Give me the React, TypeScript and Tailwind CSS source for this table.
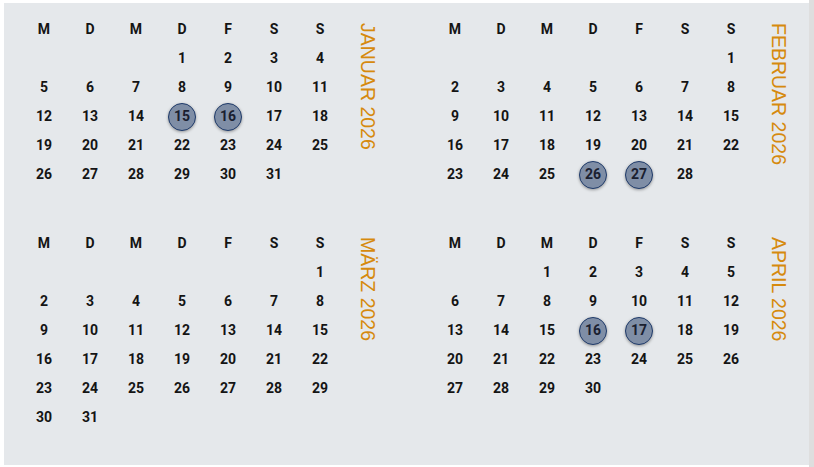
import React from "react";

interface MonthProps {
  name: string;
  offset: number; // weekday of the 1st, Monday = 0
  days: number;
  marked?: number[];
}

const weekdays = ["M", "D", "M", "D", "F", "S", "S"];

const Month = ({ name, offset, days, marked = [] }: MonthProps) => {
  const cells: (number | null)[] = [];
  for (let i = 0; i < offset; i++) cells.push(null);
  for (let d = 1; d <= days; d++) cells.push(d);
  while (cells.length % 7 !== 0) cells.push(null);

  const weeks: (number | null)[][] = [];
  for (let i = 0; i < cells.length; i += 7) weeks.push(cells.slice(i, i + 7));

  return (
    <div className="flex items-start">
      <div className="flex flex-col">
        <div className="flex">
          {weekdays.map((w, i) => (
            <div
              key={i}
              className="flex h-[29px] w-[46px] items-center justify-center text-[14px] font-bold text-[#141414]"
            >
              {w}
            </div>
          ))}
        </div>
        {weeks.map((week, wi) => (
          <div key={wi} className="flex">
            {week.map((d, di) => (
              <div
                key={di}
                className="flex h-[29px] w-[46px] items-center justify-center text-[14px] font-bold text-[#141414]"
              >
                {d !== null &&
                  (marked.includes(d) ? (
                    <span className="flex h-[28px] w-[28px] items-center justify-center rounded-full border-[1.5px] border-[#1f3b6b] bg-[#7f8ea6] text-[#1a2030] shadow-[0_1px_3px_rgba(0,0,0,0.35)]">
                      {d}
                    </span>
                  ) : (
                    d
                  ))}
              </div>
            ))}
          </div>
        ))}
      </div>
      <div className="ml-[15px] mt-[8px] font-['Liberation_Sans',Arial,sans-serif] text-[19.5px] font-normal leading-[20px] text-[#d68a0e] [writing-mode:vertical-rl]">
        {name}
      </div>
    </div>
  );
};

const App = () => {
  return (
    <div
      className="flex h-[467px] w-[814px] bg-white"
      style={{ fontFamily: "Roboto, 'Liberation Sans', sans-serif" }}
    >
      <div className="flex-1 pl-[4px] pt-[3px]">
        <div className="h-[462px] w-[805px] bg-[#e5e8eb] pl-[17px] pt-[12px]">
          <div className="grid grid-cols-[411px_411px] gap-y-[40px]">
            <Month name="JANUAR 2026" offset={3} days={31} marked={[15, 16]} />
            <Month name="FEBRUAR 2026" offset={6} days={28} marked={[26, 27]} />
            <Month name="MÄRZ 2026" offset={6} days={31} />
            <Month name="APRIL 2026" offset={2} days={30} marked={[16, 17]} />
          </div>
        </div>
      </div>
      <div className="h-full w-[5px] bg-[#dedede]" />
    </div>
  );
};

export default App;
